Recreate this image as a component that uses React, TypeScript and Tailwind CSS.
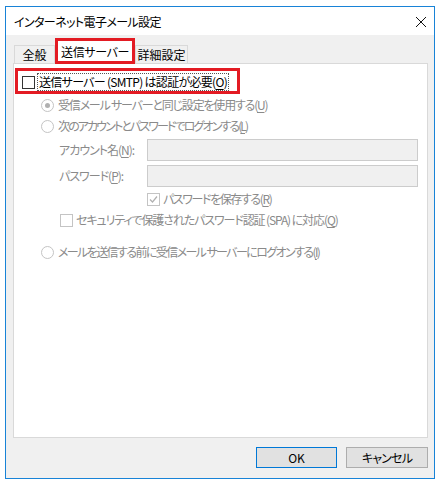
import React from "react";

const FONT = "[font-family:'Noto_Sans_CJK_JP','Noto_Sans',sans-serif] [font-feature-settings:'palt']";
const GRAY = "text-[#8a8a8a]";

function Key({ k }: { k: string }) {
  return (
    <>
      (<span className="underline underline-offset-2">{k}</span>)
    </>
  );
}

function Radio({ checked }: { checked?: boolean }) {
  return (
    <span className="flex h-[13px] w-[13px] shrink-0 items-center justify-center rounded-full border border-[#c4c4c4] bg-white">
      {checked && <span className="h-[5px] w-[5px] rounded-full bg-[#b0b0b0]" />}
    </span>
  );
}

function Box({ checked, enabled }: { checked?: boolean; enabled?: boolean }) {
  return (
    <span
      className={`flex h-[13px] w-[13px] shrink-0 items-center justify-center border ${
        enabled ? "border-[#333333] bg-white" : "border-[#c4c4c4] bg-white"
      }`}
    >
      {checked && (
        <svg width="9" height="9" viewBox="0 0 9 9">
          <path d="M1 4.5 L3.5 7 L8 1.5" fill="none" stroke="#b0b0b0" strokeWidth="1.2" />
        </svg>
      )}
    </span>
  );
}

export default function App() {
  return (
    <div className={`h-[486px] w-[442px] bg-white text-[12px] leading-none text-black ${FONT}`}>
      <div className="ml-[5px] mt-[6px] flex h-[473px] w-[430px] flex-col border border-[#1883d7] bg-[#f0f0f0]">
        {/* TITLE */}
        <div className="flex h-[28px] items-center justify-between bg-white pl-[8px] pr-[6px]">
          <span className="pt-[1px] tracking-[-0.6px]">インターネット電子メール設定</span>
          <svg width="12" height="12" viewBox="0 0 12 12" className="mr-[1px] mt-[2px]">
            <path d="M1 1 L11 11 M11 1 L1 11" stroke="#111" strokeWidth="1" />
          </svg>
        </div>

        {/* BODY */}
        <div className="flex flex-1 flex-col pl-[7px] pr-[6px] pt-[4px]">
          {/* TABS */}
          <div className="flex h-[25px] items-end pl-[1px]">
            <div className="flex h-[19px] w-[41px] items-center justify-center border border-b-0 border-[#d9d9d9] bg-[#f0f0f0]">
              全般
            </div>
            <div className="relative z-10 flex h-[26px] w-[80px] items-center justify-center border-[3px] border-[#e31b23] bg-white pt-[1px] tracking-[-0.4px]">
              送信サーバー
            </div>
            <div className="flex h-[19px] w-[53px] items-center justify-center border border-b-0 border-[#d9d9d9] bg-[#f0f0f0]">
              詳細設定
            </div>
          </div>

          {/* PANEL */}
          <div className="relative -mt-[1px] flex h-[375px] flex-col border border-[#d9d9d9] bg-white">
            <div className="pointer-events-none absolute left-[1px] top-[4px] h-[26px] w-[225px] border-[3px] border-[#e31b23]" />

            <div className="mt-[8px] flex h-[20px] items-center pl-[8px]">
              <Box enabled />
              <span className="ml-[2px] border border-dotted border-[#555] px-[1px] py-[2px] tracking-[-0.7px]">
                送信サーバー (SMTP) は認証が必要<Key k="O" />
              </span>
            </div>

            <div className={`mt-[3px] flex h-[20px] items-center pl-[27px] ${GRAY}`}>
              <Radio checked />
              <span className="ml-[4px] tracking-[-1.2px]">
                受信メール サーバーと同じ設定を使用する<Key k="U" />
              </span>
            </div>

            <div className={`mt-[1px] flex h-[20px] items-center pl-[27px] ${GRAY}`}>
              <Radio />
              <span className="ml-[4px] tracking-[-1.9px]">
                次のアカウントとパスワードでログオンする<Key k="L" />
              </span>
            </div>

            <div className={`mt-[3px] flex items-center pl-[45px] ${GRAY}`}>
              <span className="w-[88px] tracking-[-1px]">
                アカウント名<Key k="N" />:
              </span>
              <div className="h-[22px] w-[271px] border border-[#cccccc] bg-[#f0f0f0]" />
            </div>

            <div className={`mt-[4px] flex items-center pl-[45px] ${GRAY}`}>
              <span className="w-[88px] tracking-[-1px]">
                パスワード<Key k="P" />:
              </span>
              <div className="h-[22px] w-[271px] border border-[#cccccc] bg-[#f0f0f0]" />
            </div>

            <div className={`mt-[3px] flex h-[18px] items-center pl-[133px] ${GRAY}`}>
              <Box checked />
              <span className="ml-[3px] tracking-[-1.4px]">
                パスワードを保存する<Key k="R" />
              </span>
            </div>

            <div className={`mt-[3px] flex h-[18px] items-center pl-[46px] ${GRAY}`}>
              <Box />
              <span className="ml-[3px] tracking-[-1.1px]">
                セキュリティで保護されたパスワード認証 (SPA) に対応<Key k="Q" />
              </span>
            </div>

            <div className={`mt-[13px] flex h-[20px] items-center pl-[27px] ${GRAY}`}>
              <Radio />
              <span className="ml-[4px] tracking-[-1.6px]">
                メールを送信する前に受信メール サーバーにログオンする<Key k="I" />
              </span>
            </div>
          </div>

          {/* BUTTONS */}
          <div className="mt-[9px] flex justify-end gap-[9px]">
            <button className="h-[21px] w-[81px] border border-[#0078d7] bg-[#e1e1e1] text-[12px]">OK</button>
            <button className="h-[21px] w-[82px] border border-[#adadad] bg-[#e1e1e1] text-[12px] tracking-[-0.8px]">
              キャンセル
            </button>
          </div>
        </div>
      </div>
    </div>
  );
}
